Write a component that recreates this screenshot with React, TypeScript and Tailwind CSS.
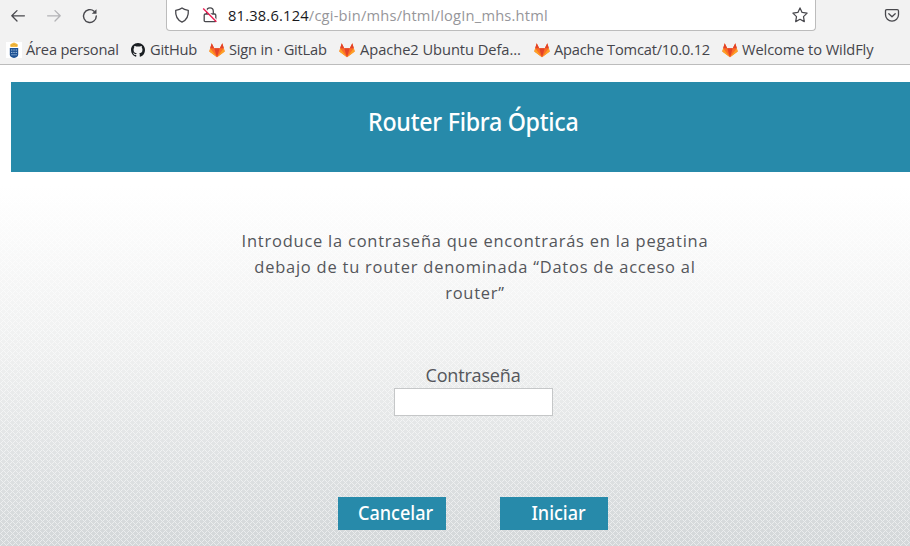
import React from "react";

function GitLabIcon() {
  return (
    <svg width="16" height="16" viewBox="0 0 16 16" className="shrink-0">
      <path d="M8 15.3 0.3 9.4 2.7 1.2 5.2 6.3h5.6l2.5-5.1 2.4 8.2z" fill="#fc6d26" />
      <path d="M0.3 9.4 1.1 6.3 8 15.3z" fill="#fca326" />
      <path d="M15.7 9.4 14.9 6.3 8 15.3z" fill="#fca326" />
      <path d="M5.2 6.3h5.6L8 15.3zM2.7 1.2 5.2 6.3H1.1zM13.3 1.2l1.6 5.1h-4.1z" fill="#e24329" />
    </svg>
  );
}

function GitHubIcon() {
  return (
    <svg width="14" height="14" viewBox="0 0 16 16" fill="#1b1f23" className="shrink-0">
      <path d="M8 0C3.58 0 0 3.58 0 8c0 3.54 2.29 6.53 5.47 7.59.4.07.55-.17.55-.38 0-.19-.01-.82-.01-1.49-2.01.37-2.53-.49-2.69-.94-.09-.23-.48-.94-.82-1.13-.28-.15-.68-.52-.01-.53.63-.01 1.08.58 1.23.82.72 1.21 1.87.87 2.33.66.07-.52.28-.87.51-1.07-1.78-.2-3.64-.89-3.64-3.95 0-.87.31-1.59.82-2.15-.08-.2-.36-1.02.08-2.12 0 0 .67-.21 2.2.82A7.65 7.65 0 0 1 8 3.87c.68 0 1.36.09 2 .26 1.53-1.04 2.2-.82 2.2-.82.44 1.1.16 1.92.08 2.12.51.56.82 1.27.82 2.15 0 3.07-1.87 3.75-3.65 3.95.29.25.54.73.54 1.48 0 1.07-.01 1.93-.01 2.2 0 .21.15.46.55.38A8.01 8.01 0 0 0 16 8c0-4.42-3.58-8-8-8z" />
    </svg>
  );
}

function CrestIcon() {
  return (
    <svg width="16" height="16" viewBox="0 0 16 16" className="shrink-0">
      <path d="M0 0h16v16H0z" fill="#fff" />
      <path d="M4.6 5 4 2.7 5.6 1.6 8 .6l2.4 1L12 2.7 11.4 5z" fill="#f3bd48" />
      <path d="M5.4 3.2h1.2M7.4 2.7h1.2M9.4 3.2h1.2" stroke="#d89520" />
      <path d="M3.8 6h8.4v6.5Q12.2 15 8 16 3.8 15 3.8 12.5z" fill="#1c5194" />
      <path d="M5 8h1.4M7.3 8h1.4M9.6 8H11M5 10.4h1.4M7.3 10.4h1.4M9.6 10.4H11M5.4 12.8h1.3M7.4 12.8h1.3M9.4 12.8h1.3" stroke="#a9c4e0" />
    </svg>
  );
}

function Bookmark({ icon, children, className }: { icon: React.ReactNode; children: React.ReactNode; className: string }) {
  return (
    <div className={`flex h-5 shrink-0 items-center whitespace-nowrap ${className}`}>
      {icon}
      <span className="-mt-[2px] h-5">{children}</span>
    </div>
  );
}

function BrowserChrome() {
  return (
    <header className="h-[65px] border-b border-[#bcbcbc] bg-[#f2f2f2] text-[#45454b]">
      <div className="flex h-[31px]">
        <div className="flex w-[166px] shrink-0 pt-2 pl-[10px]">
          <svg width="16" height="16" viewBox="0 0 16 16" fill="none" stroke="#48484d" strokeWidth="1.3" strokeLinecap="round" strokeLinejoin="round">
            <path d="M14.4 7.8H1.8M7 2.6 1.8 7.8 7 13" />
          </svg>
          <svg width="16" height="16" viewBox="0 0 16 16" fill="none" stroke="#b3b3b6" strokeWidth="1.3" strokeLinecap="round" strokeLinejoin="round" className="ml-5">
            <path d="M1.6 7.8h12.6M9 2.6l5.2 5.2L9 13" />
          </svg>
          <svg width="16" height="16" viewBox="0 0 16 16" fill="none" stroke="#48484d" strokeWidth="1.4" strokeLinecap="round" className="ml-5">
            <path d="M12.1 3.2A6.4 6.4 0 1 0 14.3 8" />
            <path d="M14.5 1.2v4.6H9.8z" fill="#48484d" stroke="none" />
          </svg>
        </div>
        <div className="flex h-[31px] w-[650px] shrink-0 rounded-b-[4px] border border-t-0 border-[#bcbcbc] bg-white pl-[7px]">
          <svg width="16" height="16" viewBox="0 0 16 16" fill="none" stroke="#48484d" strokeWidth="1.3" strokeLinejoin="round" className="mt-[7px]">
            <path d="M8 .9c2 1.6 4.2 2 6.3 2.4.4 5.3-1.7 9.8-6.3 11.8C3.4 13.1 1.3 8.6 1.7 3.3 3.8 2.9 6 2.5 8 .9z" />
          </svg>
          <svg width="16" height="16" viewBox="0 0 16 16" fill="none" className="mt-[7px] ml-3">
            <path d="M4.7 7V4.2a3.3 3.3 0 0 1 6.6 0V7M3.4 7h9.2q1.2 0 1.2 1.2v5.3q0 1.2-1.2 1.2H3.4q-1.2 0-1.2-1.2V8.2Q2.2 7 3.4 7z" stroke="#48484d" strokeWidth="1.3" />
            <path d="m2.2 1 13.2 13.2" stroke="#fff" strokeWidth="1.6" />
            <path d="m1.2 1.6 13.2 13.2" stroke="#ee1d52" strokeWidth="1.4" />
          </svg>
          <div className="mt-[5px] ml-[10px] h-5 w-[560px] text-[14.67px] leading-5 whitespace-nowrap text-[#96969a]">
            <span className="tracking-[0.2px] text-[#18181c]">81.38.6.124</span>
            <span className="tracking-[0.21px]">/cgi-bin/mhs/html/logIn_mhs.html</span>
          </div>
          <svg width="16" height="16" viewBox="0 0 16 16" fill="none" stroke="#48484d" strokeWidth="1.25" strokeLinejoin="round" className="mt-[7px] ml-1">
            <path d="m8 .9 2.1 4.5 5 .7-3.6 3.5.8 5L8 12.3l-4.3 2.3.8-5L.9 6.1l5-.7z" />
          </svg>
        </div>
        <svg width="16" height="16" viewBox="0 0 16 16" fill="none" stroke="#48484d" strokeWidth="1.3" strokeLinecap="round" strokeLinejoin="round" className="mt-[7px] ml-[68px]">
          <path d="M2.8 2.6h10.4q1.3 0 1.3 1.3v3.8a6.5 6.5 0 0 1-13 0V3.9q0-1.3 1.3-1.3z" />
          <path d="m4.8 6.7 3.2 3 3.2-3" />
        </svg>
      </div>
      <nav className="mt-[9px] flex text-[14.67px] leading-5">
        <Bookmark icon={<CrestIcon />} className="ml-[6px] w-[125px] gap-1 tracking-[-0.2px]">Área personal</Bookmark>
        <Bookmark icon={<GitHubIcon />} className="w-[78px] gap-[5px] tracking-[-0.2px]">GitHub</Bookmark>
        <Bookmark icon={<GitLabIcon />} className="w-[130px] gap-1 tracking-[-0.2px]">Sign in · GitLab</Bookmark>
        <Bookmark icon={<GitLabIcon />} className="w-[195px] gap-[5px] tracking-[-0.05px]">Apache2 Ubuntu Defa…</Bookmark>
        <Bookmark icon={<GitLabIcon />} className="w-[188px] gap-1 tracking-[-0.2px]">Apache Tomcat/10.0.12</Bookmark>
        <Bookmark icon={<GitLabIcon />} className="gap-1 tracking-[-0.1px]">Welcome to WildFly</Bookmark>
      </nav>
    </header>
  );
}

export default function App() {
  return (
    <div className="flex h-[546px] w-[910px] flex-col overflow-hidden bg-white font-['Open_Sans','Noto_Sans',sans-serif]">
      <BrowserChrome />
      <main className="relative isolate flex-1 bg-linear-to-b from-white from-25% via-[#eff0f0] via-60% to-[#d3d7d9] pt-[17px] text-[#54565b]">
        <svg className="absolute inset-0 -z-10 h-full w-full" shapeRendering="crispEdges">
          <defs>
            <pattern id="mesh" width="6" height="6" patternUnits="userSpaceOnUse">
              <path d="M0 0h1v1H0zM1 1h1v1H1zM2 2h1v1H2zM3 3h1v1H3zM4 4h1v1H4zM5 5h1v1H5zM5 1h1v1H5zM4 2h1v1H4zM2 4h1v1H2zM1 5h1v1H1z" fill="#fff" fillOpacity=".5" />
            </pattern>
          </defs>
          <rect width="100%" height="100%" fill="url(#mesh)" />
        </svg>
        <div className="ml-[11px] flex h-[90px] items-start bg-[#278aaa] pt-[23px] pl-[357px]">
          <h1 className="origin-left scale-x-[0.93] font-['Noto_Sans',sans-serif] text-[25px] leading-8 font-medium tracking-[-0.3px] whitespace-nowrap text-white">Router Fibra Óptica</h1>
        </div>
        <p className="mt-[56px] ml-[175px] w-[600px] scale-x-[0.968] text-center text-[17px] leading-[26px] tracking-[0.8px]">
          Introduce la contraseña que encontrarás en la pegatina<br />
          debajo de tu router denominada “Datos de acceso al<br />
          router”
        </p>
        <form className="mt-[56px]">
          <label htmlFor="password" className="ml-[394px] block w-[158px] scale-x-95 text-center text-[19px] leading-[26px] tracking-[-0.2px]">Contraseña</label>
          <input id="password" type="password" className="ml-[394px] block h-[28px] w-[159px] border border-[#c5c7c8] bg-white" />
          <div className="mt-[81px] flex gap-[54px] pl-[338px] font-['Noto_Sans',sans-serif]">
            <button type="button" className="h-[33px] w-[108px] bg-[#278aaa] pl-[7px] text-[19px] leading-[31px] font-medium text-white"><span className="inline-block scale-x-95">Cancelar</span></button>
            <button type="button" className="h-[33px] w-[108px] bg-[#278aaa] pl-[9px] text-[19px] leading-[31px] font-medium text-white"><span className="inline-block scale-x-95">Iniciar</span></button>
          </div>
        </form>
      </main>
    </div>
  );
}
